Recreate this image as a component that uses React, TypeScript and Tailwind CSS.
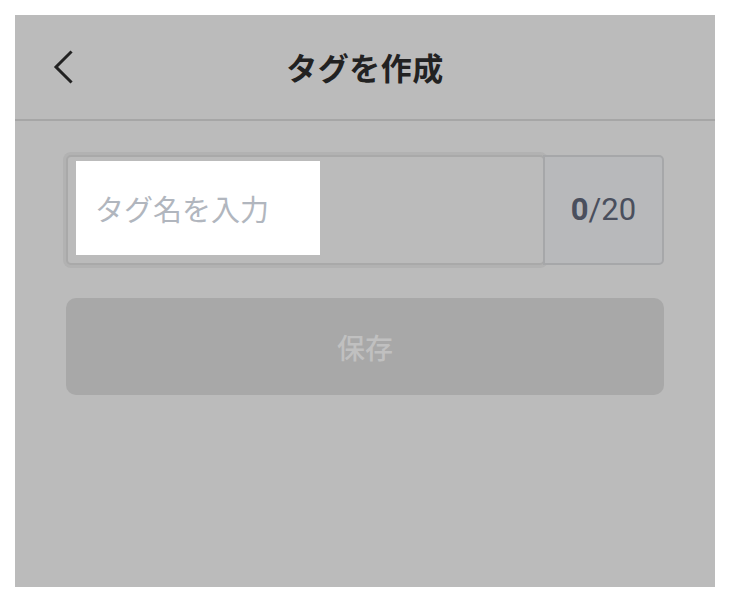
import React from "react";

export default function App() {
  return (
    <div className="w-[730px] h-[602px] bg-white p-[15px]">
      <div className="w-[700px] h-[572px] bg-[#bbbbbb] flex flex-col">
        {/* Header */}
        <div className="h-[106px] border-b-2 border-[#a6a6a6] flex items-center relative shrink-0">
          <div className="pl-[38px] flex items-center">
            <svg width="24" height="36" viewBox="0 0 24 36" className="block mt-[-1px]">
              <polyline
                points="17.5,3.5 3,18 17.5,32.5"
                fill="none"
                stroke="#222222"
                strokeWidth="3"
                strokeLinecap="square"
              />
            </svg>
          </div>
          <div
            className="absolute inset-0 flex items-center justify-center text-[31px] font-bold text-[#222222] tracking-[0.5px]"
            style={{ fontFamily: '"Noto Sans CJK JP", "Noto Sans", sans-serif' }}
          >
            タグを作成
          </div>
        </div>

        {/* Content */}
        <div className="px-[51px] pt-[34px] flex flex-col">
          <div className="flex h-[110px]">
            <div className="flex-1 border-2 border-[#a9a9a9] rounded-[5px] shadow-[0_0_0_3px_#b2b2b2] flex items-start bg-[#bbbbbb] relative z-0">
              <div className="mt-[4px] ml-[8px] w-[244px] h-[94px] bg-white flex items-center pl-[19px]">
                <span
                  className="text-[29px] text-[#b1b6be] leading-none"
                  style={{ fontFamily: '"Noto Sans CJK JP", "Noto Sans", sans-serif' }}
                >
                  タグ名を入力
                </span>
              </div>
            </div>
            <div
              className="w-[121px] -ml-[2px] border-2 border-[#a6a7a9] rounded-r-[5px] bg-[#b8b9bb] flex items-center justify-center text-[31px] text-[#4a4f5d] relative z-10"
              style={{ fontFamily: 'Roboto, "Liberation Sans", sans-serif' }}
            >
              <span className="font-bold">0</span>
              <span>/20</span>
            </div>
          </div>

          <div className="mt-[33px] h-[97px] rounded-[10px] bg-[#a8a8a8] flex items-center justify-center">
            <span
              className="text-[28px] font-medium text-[#c0c0c0]"
              style={{ fontFamily: '"Noto Sans CJK JP", "Noto Sans", sans-serif' }}
            >
              保存
            </span>
          </div>
        </div>
      </div>
    </div>
  );
}
